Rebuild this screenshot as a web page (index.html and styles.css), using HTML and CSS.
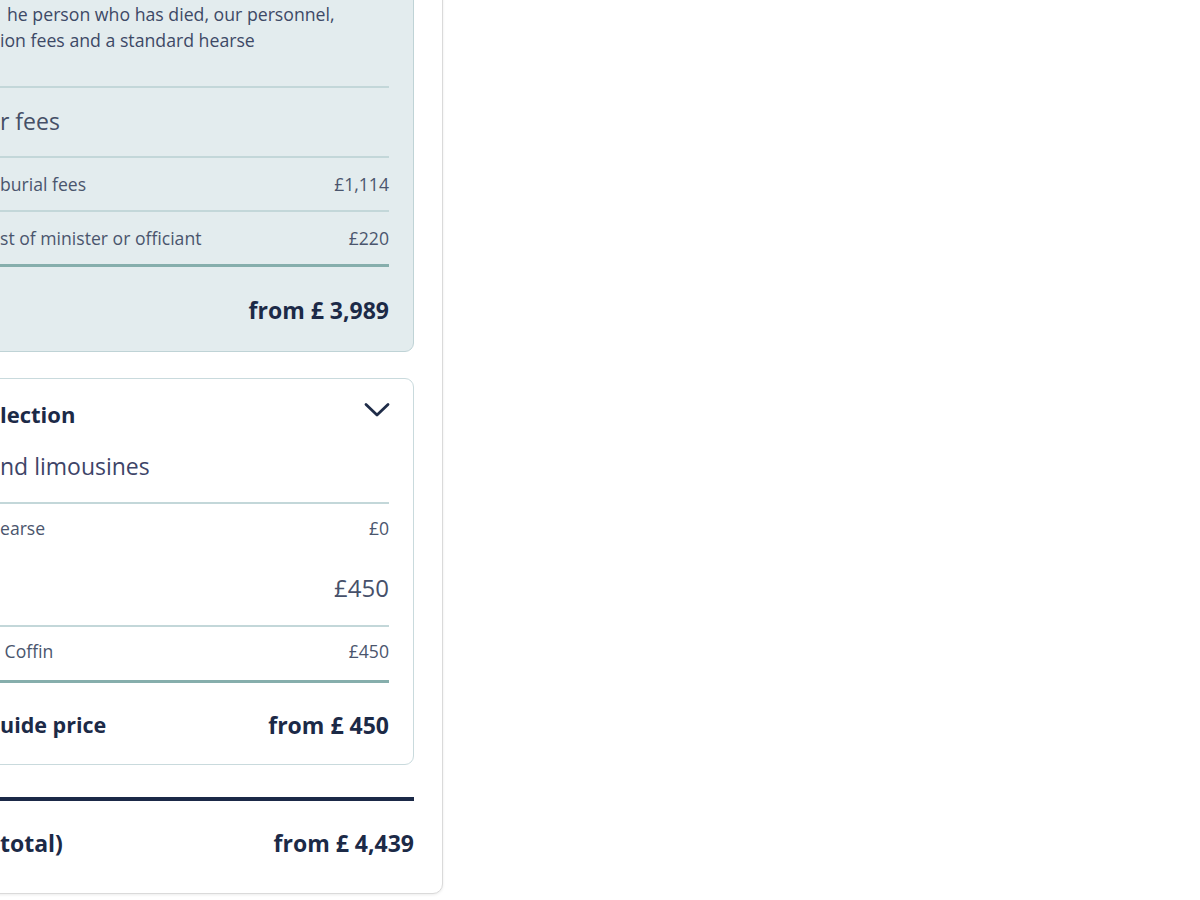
FILE: index.html
```html
<!DOCTYPE html>
<html lang="en">
<head>
<meta charset="utf-8">
<title>Funeral price summary</title>
<link rel="stylesheet" href="styles.css">
</head>
<body>
<section class="panel">
  <div class="card card--tinted">
    <p class="desc">he person who has died, our personnel,<br>ion fees and a standard hearse</p>
    <hr class="rule">
    <h3 class="section-title">r fees</h3>
    <hr class="rule">
    <div class="line-item"><span>burial fees</span><span>£1,114</span></div>
    <hr class="rule">
    <div class="line-item"><span>st of minister or officiant</span><span>£220</span></div>
    <hr class="rule rule--thick">
    <div class="subtotal"><span></span><span>from £ 3,989</span></div>
  </div>

  <div class="card card--white">
    <div class="card-head">
      <h3 class="card-title">lection</h3>
      <svg class="chevron" width="26" height="16" viewBox="0 0 26 16" aria-hidden="true">
        <path d="M2 2.5 L13 13 L24 2.5" fill="none" stroke="#1f2c48" stroke-width="2.8" stroke-linecap="round" stroke-linejoin="round"/>
      </svg>
    </div>
    <div class="group-title">nd limousines</div>
    <hr class="rule">
    <div class="line-item line-item--small"><span>earse</span><span>£0</span></div>
    <div class="group-row"><span></span><span>£450</span></div>
    <hr class="rule">
    <div class="line-item line-item--small"><span>&nbsp;Coffin</span><span>£450</span></div>
    <hr class="rule rule--thick">
    <div class="subtotal subtotal--white"><span class="label-tight">uide price</span><span>from £ 450</span></div>
  </div>

  <hr class="rule rule--navy">
  <div class="grand-total"><span>total)</span><span>from £ 4,439</span></div>
</section>
</body>
</html>
```

FILE: styles.css
```css
html, body {
  margin: 0;
  padding: 0;
  background: #ffffff;
  overflow: hidden;
}

body {
  font-family: "Open Sans", Lato, "Noto Sans", "Liberation Sans", sans-serif;
  color: #3e4a66;
  width: 1200px;
  height: 900px;
}

.panel {
  box-sizing: border-box;
  width: 483px;
  margin: -49px 0 0 -40px;
  padding: 24px 28px 35px 14px;
  background: #ffffff;
  border: 1px solid #dadada;
  border-radius: 10px;
  box-shadow: 0 1px 3px rgba(0, 0, 0, 0.08);
}

.card {
  border-radius: 9px;
  padding: 24px;
}

.card--tinted {
  background: #e3ecee;
  border: 1px solid #bfd3d6;
  padding-bottom: 24px;
}

.card--white {
  background: #ffffff;
  border: 1px solid #c9dadd;
  margin-top: 26px;
}

.desc {
  margin: 0 0 33px;
  font-size: 17.7px;
  line-height: 26px;
  text-indent: 7px;
  color: #3d4966;
}

.rule {
  border: 0;
  margin: 0;
  height: 2px;
  background: #c3d7d9;
}

.rule--thick {
  height: 3px;
  background: #86aeac;
}

.rule--navy {
  height: 4px;
  background: #1b2947;
  margin-top: 32px;
}

.section-title {
  margin: 0;
  padding: 18px 0 20px;
  font-size: 23px;
  line-height: 30px;
  font-weight: 400;
  color: #454f66;
}

.line-item {
  display: flex;
  justify-content: space-between;
  padding: 15px 0;
  font-size: 17.6px;
  line-height: 22px;
  color: #4a556d;
}

.line-item--small {
  padding: 14px 0 19px;
  font-size: 17.6px;
  line-height: 20px;
}

.subtotal {
  display: flex;
  justify-content: space-between;
  padding: 28px 0 2px;
  font-size: 23px;
  line-height: 30px;
  font-weight: 700;
  color: #1c2a47;
}

.subtotal--white {
  padding: 27px 0 0;
  line-height: 30px;
}

.label-tight {
  font-size: 21.5px;
}

.card-head {
  display: flex;
  justify-content: space-between;
  align-items: flex-start;
}

.card-title {
  margin: 0;
  font-size: 22px;
  line-height: 22px;
  font-weight: 700;
  color: #1c2a47;
}

.chevron {
  display: block;
  margin-top: -1px;
  margin-right: -1px;
}

.group-title {
  margin: 27px 0 22px;
  font-size: 23px;
  line-height: 28px;
  color: #3d4468;
}

.group-row {
  display: flex;
  justify-content: space-between;
  margin-top: 17px;
  padding-bottom: 23px;
  font-size: 24px;
  line-height: 28px;
  color: #46506a;
}

.grand-total {
  display: flex;
  justify-content: space-between;
  padding: 27px 0 0 25px;
  font-size: 23px;
  line-height: 30px;
  font-weight: 700;
  color: #1c2a47;
}
```
